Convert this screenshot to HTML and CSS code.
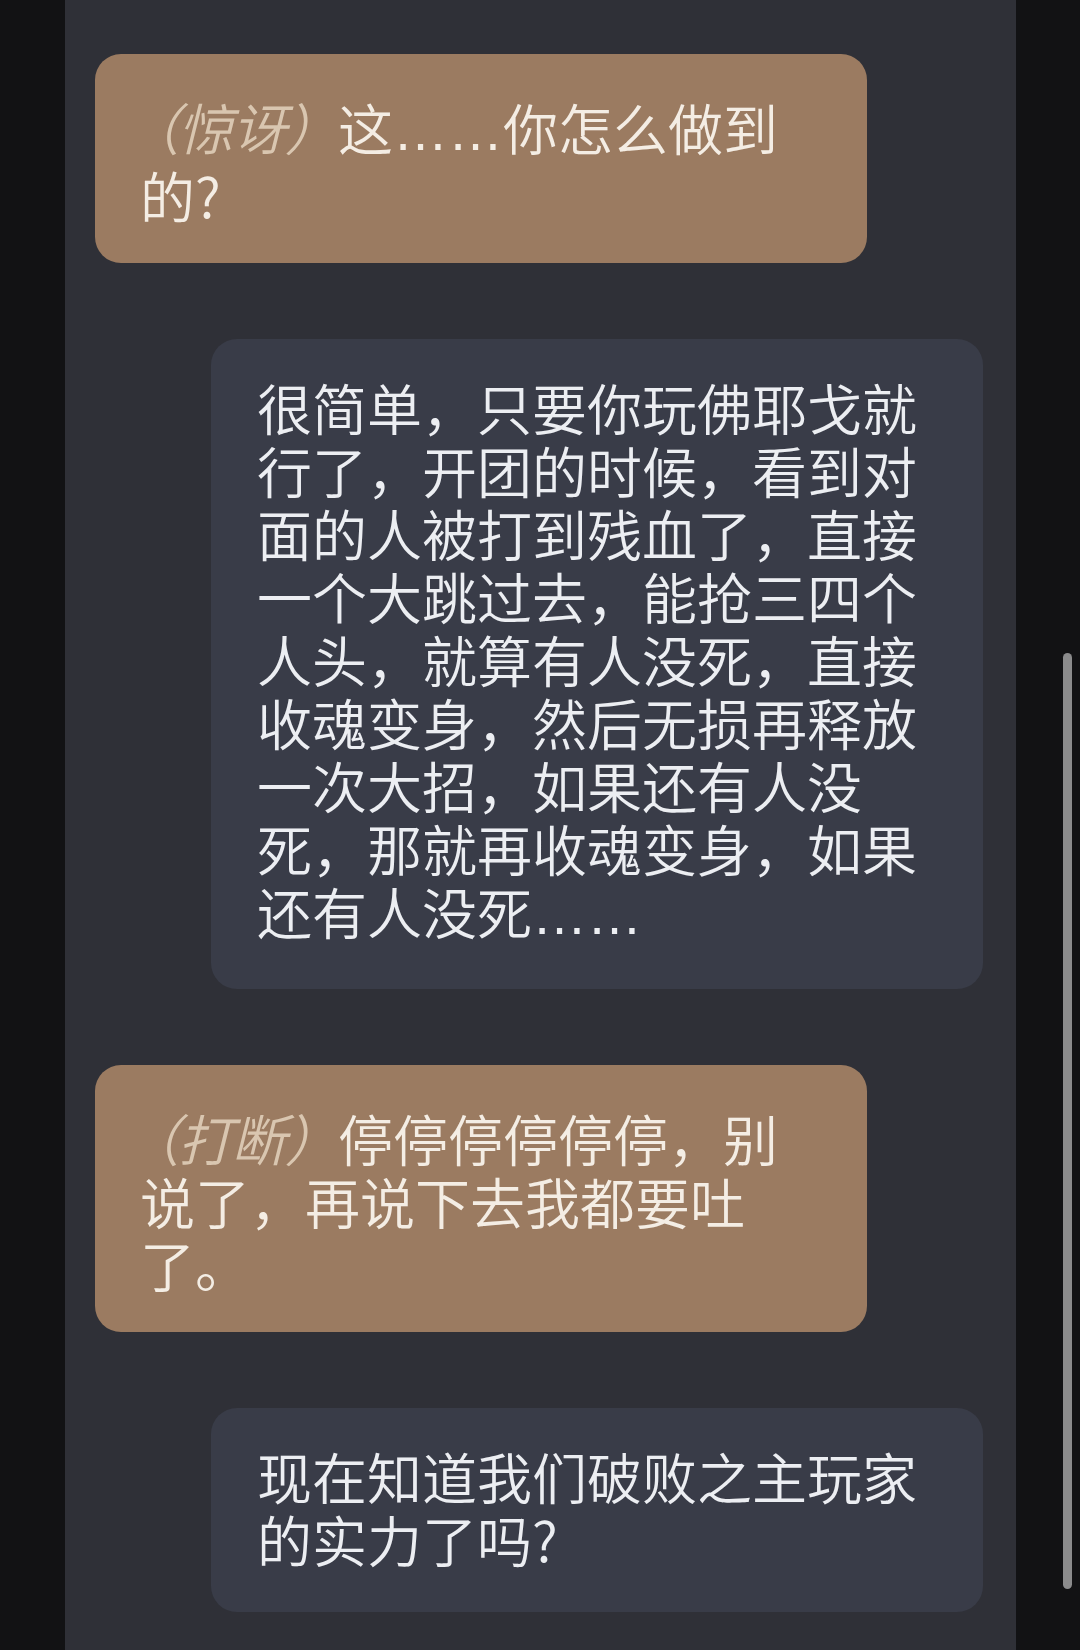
FILE: index.html
```html
<!DOCTYPE html>
<html lang="zh-CN">
<head>
  <meta charset="UTF-8">
  <meta name="viewport" content="width=device-width, initial-scale=1.0">
  <title>对话</title>
  <link rel="stylesheet" href="styles.css">
</head>
<body>
  <div class="screen">
    <div class="chat">
      <div class="msg left">
        <p class="bubble warm"><span class="action">（惊讶）</span>这<span class="dots">……</span>你怎么做到的?</p>
      </div>
      <div class="msg right">
        <p class="bubble cool">很简单，只要你玩佛耶戈就行了，开团的时候，看到对面的人被打到残血了，直接一个大跳过去，能抢三四个人头，就算有人没死，直接收魂变身，然后无损再释放一次大招，如果还有人没死，那就再收魂变身，如果还有人没死<span class="dots">……</span></p>
      </div>
      <div class="msg left">
        <p class="bubble warm"><span class="action">（打断）</span>停停停停停停，别说了，再说下去我都要吐了。</p>
      </div>
      <div class="msg right">
        <p class="bubble cool">现在知道我们破败之主玩家的实力了吗?</p>
      </div>
    </div>
    <div class="scrollbar"></div>
  </div>
</body>
</html>
```

FILE: styles.css
```css
* {
  margin: 0;
  padding: 0;
  box-sizing: border-box;
}

body {
  background: #121214;
  font-family: "Noto Sans CJK SC", "Noto Sans", sans-serif;
  font-weight: 350;
  color: #f1ece6;
}

.screen {
  position: relative;
  height: 1650px;
  overflow: hidden;
}

.chat {
  margin-left: 65px;
  width: 951px;
  height: 1650px;
  background: #2f3037;
  padding: 54px 33px 0 30px;
  display: flex;
  flex-direction: column;
  gap: 76px;
}

.msg {
  display: flex;
}

.msg.left { justify-content: flex-start; }
.msg.right { justify-content: flex-end; }

.bubble {
  max-width: 772px;
  font-size: 55px;
  line-height: 63px;
  border-radius: 26px;
}

.warm {
  background: #9b7b61;
  color: #f4ede4;
  padding: 41px 45px 37px 45px;
}

.cool {
  background: #393c48;
  color: #eceef2;
  padding: 36px 45px 42px 46px;
}

/* stage direction in brackets, set a little tighter */
.action {
  font-style: italic;
  color: #d9c6b0;
  margin-left: -0.28em;
  letter-spacing: -0.03em;
}

/* the CJK ellipsis sits mid-height, this one rests on the baseline */
.dots {
  font-family: "Liberation Sans", sans-serif;
}

.scrollbar {
  position: absolute;
  left: 1063px;
  top: 653px;
  width: 9px;
  height: 936px;
  border-radius: 5px;
  background: #8b8b8c;
}
```
